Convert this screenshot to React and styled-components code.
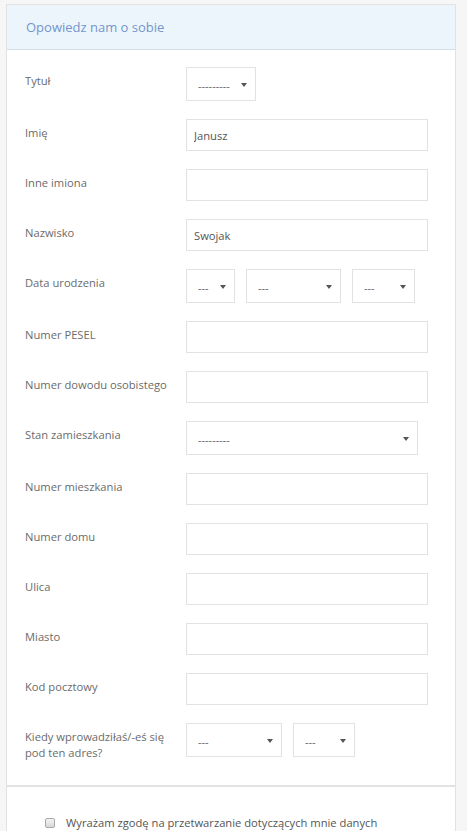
import React from "react";
import styled, { createGlobalStyle } from "styled-components";

const GlobalStyle = createGlobalStyle`
  html, body {
    margin: 0;
    padding: 0;
    background: #f6f6f6;
    font-family: "Open Sans", "Liberation Sans", sans-serif;
  }
`;

const fields = [
  { label: "Tytuł", type: "select", selects: [{ w: 70, text: "---------" }] },
  { label: "Imię", value: "Janusz" },
  { label: "Inne imiona" },
  { label: "Nazwisko", value: "Swojak" },
  {
    label: "Data urodzenia",
    type: "select",
    selects: [
      { w: 49, text: "---" },
      { w: 95, text: "---" },
      { w: 63, text: "---" },
    ],
  },
  { label: "Numer PESEL" },
  { label: "Numer dowodu osobistego" },
  { label: "Stan zamieszkania", type: "select", selects: [{ w: 232, text: "---------" }] },
  { label: "Numer mieszkania" },
  { label: "Numer domu" },
  { label: "Ulica" },
  { label: "Miasto" },
  { label: "Kod pocztowy" },
  {
    label: "Kiedy wprowadziłaś/-eś się pod ten adres?",
    type: "select",
    selects: [
      { w: 96, text: "---" },
      { w: 62, text: "---" },
    ],
  },
];

function App() {
  return (
    <>
      <GlobalStyle />
      <Page>
        <Panel>
          <Header>Opowiedz nam o sobie</Header>
          <Body>
            {fields.map((f) => (
              <Row key={f.label}>
                <Label>{f.label}</Label>
                {f.type === "select" ? (
                  <SelectGroup>
                    {f.selects.map((s, i) => (
                      <Select key={i} $w={s.w}>
                        <span>{s.text}</span>
                        <Caret />
                      </Select>
                    ))}
                  </SelectGroup>
                ) : (
                  <Input defaultValue={f.value || ""} />
                )}
              </Row>
            ))}
          </Body>
          <Footer>
            <Consent>
              <CheckBox />
              Wyrażam zgodę na przetwarzanie dotyczących mnie danych
            </Consent>
          </Footer>
        </Panel>
      </Page>
    </>
  );
}

const Page = styled.div`
  padding: 4px 11px 0 6px;
  height: 831px;
  overflow: hidden;
  box-sizing: border-box;
`;

const Panel = styled.div`
  background: #fff;
  border: 1px solid #e2e2e2;
  border-bottom: none;
`;

const Header = styled.div`
  height: 44px;
  padding-left: 19px;
  display: flex;
  align-items: center;
  background: #edf5fc;
  border-bottom: 1px solid #d6dee6;
  color: #7396cc;
  font-size: 13px;
`;

const Body = styled.div`
  padding: 17px 0 6px 18px;
  border-bottom: 2px solid #e2e2e2;
`;

const Row = styled.div`
  display: flex;
  align-items: flex-start;
  margin-bottom: 18px;
`;

const Label = styled.div`
  width: 161px;
  flex-shrink: 0;
  padding-top: 6px;
  padding-right: 8px;
  box-sizing: border-box;
  font-size: 11.2px;
  line-height: 16px;
  color: #6b6b6b;
`;

const Input = styled.input`
  width: 242px;
  height: 32px;
  box-sizing: border-box;
  border: 1px solid #e2e2e2;
  padding: 0 7px;
  font-family: "Open Sans", "Liberation Sans", sans-serif;
  font-size: 11.2px;
  color: #555;
  outline: none;
`;

const SelectGroup = styled.div`
  display: flex;
  gap: 11px;
`;

const Select = styled.div`
  position: relative;
  width: ${(p) => p.$w}px;
  height: 34px;
  box-sizing: border-box;
  border: 1px solid #e2e2e2;
  padding: 3px 0 0 11px;
  display: flex;
  align-items: center;
  font-size: 11px;
  color: #666;
`;

const Caret = styled.span`
  position: absolute;
  right: 8px;
  top: 15px;
  border-left: 3.5px solid transparent;
  border-right: 3.5px solid transparent;
  border-top: 4px solid #555;
`;

const Footer = styled.div`
  padding: 28px 0 0 38px;
  height: 60px;
`;

const Consent = styled.label`
  display: flex;
  align-items: center;
  gap: 11px;
  font-size: 11.2px;
  color: #555;
`;

const CheckBox = styled.span`
  width: 8px;
  height: 8px;
  border: 1px solid #a9a9a9;
  border-radius: 2px;
  background: linear-gradient(#f4f4f4, #d8d8d8);
`;

export default App;
